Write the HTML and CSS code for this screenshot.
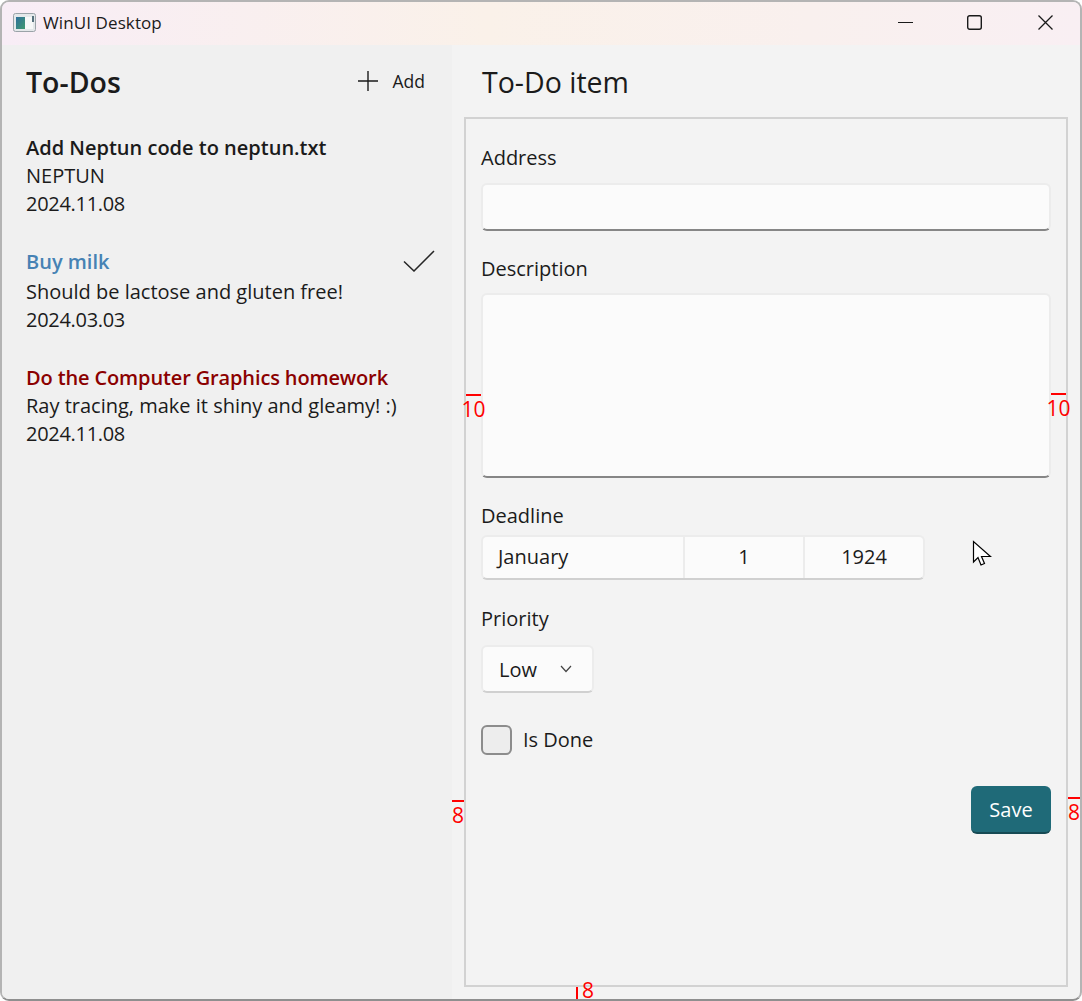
FILE: index.html
```html
<!DOCTYPE html>
<html lang="en">
<head>
  <meta charset="UTF-8" />
  <title>WinUI Desktop</title>
  <link rel="stylesheet" href="styles.css">
</head>
<body>
  <div class="window">
    <div class="titlebar">
      <svg class="app-icon" width="23" height="19" viewBox="0 0 23 19">
        <defs>
          <linearGradient id="appFill" x1="0" y1="0" x2="1" y2="1">
            <stop offset="0" stop-color="#2f6f9c"/>
            <stop offset="1" stop-color="#3f9a6f"/>
          </linearGradient>
        </defs>
        <rect x="0.5" y="0.5" width="22" height="18" rx="2" fill="#e4e8ea" stroke="#9aa3a8"/>
        <rect x="3" y="4" width="9" height="12" fill="url(#appFill)"/>
        <rect x="12" y="4" width="8" height="12" fill="#f6f8f8"/>
        <rect x="19" y="3" width="2" height="6" fill="#56707c"/>
      </svg>
      <span class="app-title">WinUI Desktop</span>
      <div class="caption-btns">
        <svg width="15" height="15" viewBox="0 0 15 15"><path d="M0 7.5H15" stroke="#1a1a1a" stroke-width="1.2"/></svg>
        <svg width="15" height="15" viewBox="0 0 15 15"><rect x="0.7" y="0.7" width="13.6" height="13.6" rx="2" fill="none" stroke="#1a1a1a" stroke-width="1.4"/></svg>
        <svg class="caption-close" width="15" height="15" viewBox="0 0 15 15"><path d="M0.5 0.5L14.5 14.5M14.5 0.5L0.5 14.5" stroke="#1a1a1a" stroke-width="1.3"/></svg>
      </div>
    </div>

    <div class="content">
      <aside class="list-pane">
        <div class="list-header">
          <h1>To-Dos</h1>
          <div class="add-btn">
            <svg width="20" height="20" viewBox="0 0 20 20"><path d="M10 0V20M0 10H20" stroke="#1a1a1a" stroke-width="1.4"/></svg>
            <span>Add</span>
          </div>
        </div>
        <div class="todo">
          <div class="todo-title">Add Neptun code to neptun.txt</div>
          <div>NEPTUN</div>
          <div class="todo-date">2024.11.08</div>
        </div>
        <div class="todo">
          <div class="todo-title blue">Buy milk</div>
          <div>Should be lactose and gluten free!</div>
          <div class="todo-date">2024.03.03</div>
          <svg class="done-mark" width="32" height="22" viewBox="0 0 32 22"><path d="M1 11.5L11 21L31 1" fill="none" stroke="#262626" stroke-width="1.5"/></svg>
        </div>
        <div class="todo">
          <div class="todo-title red">Do the Computer Graphics homework</div>
          <div>Ray tracing, make it shiny and gleamy! :)</div>
          <div class="todo-date">2024.11.08</div>
        </div>
      </aside>

      <main class="detail-pane">
        <h2>To-Do item</h2>
        <div class="form-box">
          <label class="first">Address</label>
          <div class="field address"></div>
          <label>Description</label>
          <div class="field description"></div>
          <label class="deadline-label">Deadline</label>
          <div class="date-picker">
            <div class="date-month">January</div>
            <div class="date-day">1</div>
            <div class="date-year">1924</div>
          </div>
          <label class="priority-label">Priority</label>
          <div class="combo">
            <span>Low</span>
            <svg width="12" height="8" viewBox="0 0 12 8"><path d="M1 1L6 6.5L11 1" fill="none" stroke="#444" stroke-width="1.2"/></svg>
          </div>
          <div class="check-row">
            <div class="checkbox"></div>
            <span class="check-label">Is Done</span>
          </div>
          <div class="actions">
            <div class="save-btn">Save</div>
          </div>
        </div>
      </main>
    </div>

    <!-- margin annotations drawn on top of the screenshot -->
    <div class="note" id="noteLeft10">10</div>
    <div class="note" id="noteRight10">10</div>
    <div class="note" id="noteLeft8">8</div>
    <div class="note" id="noteRight8">8</div>
    <div class="note-bottom"><i></i><span>8</span></div>

    <svg class="cursor" width="20" height="28" viewBox="0 0 20 28">
      <path d="M1.5 1.5V22L6 17.5L9 25L12.5 23.5L9.5 16.5H18.5Z" fill="#fff" stroke="#000" stroke-width="1.2"/>
    </svg>
  </div>
</body>
</html>
```

FILE: styles.css
```css
* {
  box-sizing: border-box;
}
html, body {
  margin: 0;
  padding: 0;
  background: #fff;
}
body {
  font-family: "Open Sans", "Noto Sans", sans-serif;
  font-size: 20px;
  color: #1b1b1b;
}
.window {
  position: relative;
  width: 1082px;
  height: 1001px;
  display: flex;
  flex-direction: column;
  border: 2px solid #b4b4b4;
  border-bottom-color: #8f8f8f;
  border-radius: 9px;
  overflow: hidden;
  background: #f3f3f3;
}
.titlebar {
  height: 43px;
  flex: none;
  display: flex;
  align-items: center;
  padding: 0 0 3px 11px;
  background: linear-gradient(90deg, #f8edf6 0%, #faf1e9 45%, #f9f0ee 75%, #f9eff3 100%);
}
.app-icon {
  flex: none;
}
.app-title {
  margin-left: 7px;
  font-size: 17px;
  letter-spacing: 0.1px;
}
.caption-btns {
  margin-left: auto;
  display: flex;
  gap: 54px;
  padding-right: 27px;
}
.caption-close {
  margin-left: 2px;
}
.content {
  flex: 1;
  display: flex;
  min-height: 0;
}
.list-pane {
  width: 450px;
  flex: none;
  background: #f0f0f0;
  padding: 0 16px 0 24px;
}
.list-header {
  height: 76px;
  margin-bottom: 13px;
  display: flex;
  align-items: center;
  justify-content: space-between;
  padding: 0 11px 3px 0;
}
.list-header h1 {
  margin: 0;
  font-size: 28.5px;
  font-weight: 600;
}
.add-btn {
  display: flex;
  align-items: center;
  gap: 15px;
  font-size: 17.5px;
}
.add-btn svg {
  margin-top: -2px;
}
.add-btn span {
  margin-top: -2px;
}
.todo {
  position: relative;
  line-height: 28px;
  margin-bottom: 30px;
}
.todo-title {
  font-weight: 600;
}
.todo-date {
  letter-spacing: -0.3px;
}
.todo-title.blue {
  color: #4682b4;
  line-height: 32px;
  margin-top: -2px;
}
.todo-title.red {
  color: #8b0000;
  letter-spacing: -0.13px;
}
.done-mark {
  position: absolute;
  right: 1px;
  top: 4px;
}
.detail-pane {
  flex: 1;
  padding: 0 12px 12px 12px;
  display: flex;
  flex-direction: column;
}
.detail-pane h2 {
  margin: 0;
  height: 72px;
  display: flex;
  align-items: center;
  padding: 2px 0 0 18px;
  font-size: 28.5px;
  font-weight: 400;
}
.form-box {
  flex: 1;
  border: 2px solid #d2d2d2;
  padding: 0 15px;
}
label {
  display: block;
  line-height: 26px;
  margin-top: 25px;
  margin-bottom: 11px;
}
label.first {
  margin-top: 26px;
  margin-bottom: 12px;
}
.field {
  background: #fbfbfb;
  border: 2px solid #ececec;
  border-bottom-color: #868686;
  border-radius: 6px;
}
.address {
  height: 48px;
}
.description {
  height: 185px;
}
label.deadline-label {
  margin-bottom: 6px;
}
.date-picker {
  width: 444px;
  height: 45px;
  display: flex;
  background: #fbfbfb;
  border: 2px solid #ececec;
  border-bottom-color: #d0d0d0;
  border-radius: 6px;
  line-height: 39px;
}
.date-month {
  width: 200px;
  padding-left: 15px;
}
.date-day {
  width: 120px;
  text-align: center;
  border-left: 2px solid #ececec;
}
.date-year {
  flex: 1;
  text-align: center;
  border-left: 2px solid #ececec;
}
label.priority-label {
  margin-top: 26px;
  margin-bottom: 13px;
}
.combo {
  width: 113px;
  height: 48px;
  display: flex;
  align-items: center;
  justify-content: space-between;
  padding: 0 20px 0 16px;
  background: #fbfbfb;
  border: 2px solid #ececec;
  border-bottom-color: #d0d0d0;
  border-radius: 6px;
}
.check-row {
  display: flex;
  align-items: center;
  gap: 11px;
  margin-top: 32px;
}
.check-label {
  margin-top: -2px;
}
.checkbox {
  width: 31px;
  height: 30px;
  background: #ededed;
  border: 2px solid #8c8c8c;
  border-radius: 6px;
}
.actions {
  display: flex;
  justify-content: flex-end;
  margin-top: 31px;
}
.save-btn {
  width: 80px;
  height: 48px;
  display: flex;
  align-items: center;
  justify-content: center;
  color: #fff;
  background: #1f6a78;
  border-bottom: 2px solid #164a54;
  border-radius: 6px;
}
.note {
  position: absolute;
  display: flex;
  justify-content: center;
  color: #f00;
  font-size: 21px;
  line-height: 26px;
  border-top: 2px solid #f00;
}
#noteLeft10 {
  left: 464px;
  top: 392px;
  width: 15px;
}
#noteRight10 {
  left: 1049px;
  top: 391px;
  width: 15px;
}
#noteLeft8 {
  left: 450px;
  top: 798px;
  width: 12px;
}
#noteRight8 {
  left: 1066px;
  top: 795px;
  width: 12px;
}
.note-bottom {
  position: absolute;
  left: 574px;
  top: 980px;
  display: flex;
  color: #f00;
  font-size: 21px;
  line-height: 17px;
}
.note-bottom i {
  width: 2px;
  height: 12px;
  margin: 5px 4px 0 0;
  background: #f00;
}
.cursor {
  position: absolute;
  left: 970px;
  top: 538px;
}
```
